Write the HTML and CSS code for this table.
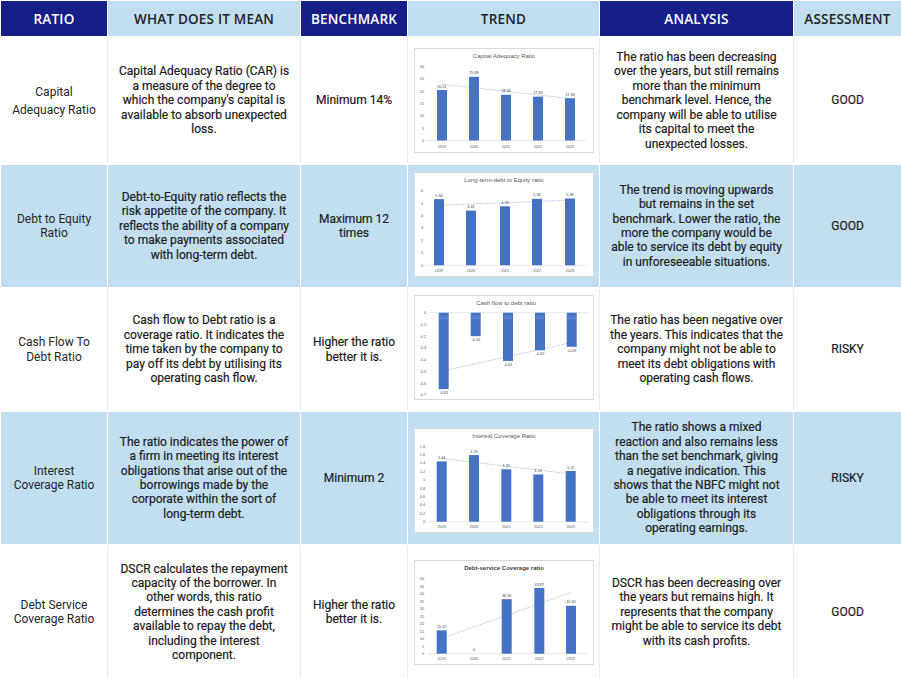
FILE: index.html
```html
<!DOCTYPE html>
<html lang="en">
<head>
<meta charset="utf-8">
<title>Ratio Analysis</title>
<link rel="stylesheet" href="styles.css">
</head>
<body>
<div class="table">
  <div class="row head">
    <div class="cell hd dark">RATIO</div>
    <div class="cell hd light">WHAT DOES IT MEAN</div>
    <div class="cell hd dark">BENCHMARK</div>
    <div class="cell hd light">TREND</div>
    <div class="cell hd dark">ANALYSIS</div>
    <div class="cell hd light">ASSESSMENT</div>
  </div>

  <div class="row white">
    <div class="cell name tall">Capital<br>Adequacy Ratio</div>
    <div class="cell txt">Capital Adequacy Ratio (CAR) is<br>a measure of the degree to<br>which the company's capital is<br>available to absorb unexpected<br>loss.</div>
    <div class="cell txt">Minimum 14%</div>
    <div class="cell chart">
      <svg class="plot" width="180" height="105" viewBox="0 0 180 105">
        <rect class="frame" x="0.5" y="0.5" width="179" height="104"/>
        <text class="title" x="90" y="10">Capital Adequacy Ratio</text>
        <g class="ylab">
          <text x="10" y="20">30</text><text x="10" y="32.3">25</text><text x="10" y="44.6">20</text><text x="10" y="56.9">15</text><text x="10" y="69.2">10</text><text x="10" y="81.5">5</text><text x="10" y="93.8">0</text>
        </g>
        <line class="axis" x1="13" y1="92.5" x2="172" y2="92.5"/>
        <line class="trend" x1="28" y1="36.1" x2="156" y2="50.6"/>
        <g class="bars">
          <rect x="23" y="42.05" width="10" height="50.45"/>
          <rect x="55" y="28.81" width="10" height="63.69"/>
          <rect x="87" y="46.84" width="10" height="45.66"/>
          <rect x="119" y="48.64" width="10" height="43.86"/>
          <rect x="151" y="50.24" width="10" height="42.26"/>
        </g>
        <g class="vlab">
          <text x="28" y="39.5">20.51</text><text x="60" y="26.3">25.89</text><text x="92" y="44.3">18.56</text><text x="124" y="46.1">17.83</text><text x="156" y="47.7">17.18</text>
        </g>
        <g class="xlab">
          <text x="28" y="99.5">2019</text><text x="60" y="99.5">2020</text><text x="92" y="99.5">2021</text><text x="124" y="99.5">2022</text><text x="156" y="99.5">2023</text>
        </g>
      </svg>
    </div>
    <div class="cell txt">The ratio has been decreasing<br>over the years, but still remains<br>more than the minimum<br>benchmark level. Hence, the<br>company will be able to utilise<br>its capital to meet the<br>unexpected losses.</div>
    <div class="cell txt">GOOD</div>
  </div>

  <div class="row blue">
    <div class="cell name">Debt to Equity<br>Ratio</div>
    <div class="cell txt">Debt-to-Equity ratio reflects the<br>risk appetite of the company. It<br>reflects the ability of a company<br>to make payments associated<br>with long-term debt.</div>
    <div class="cell txt">Maximum 12<br>times</div>
    <div class="cell chart up">
      <svg class="plot" width="180" height="105" viewBox="0 0 180 105">
        <rect class="frame" x="0.5" y="0.5" width="179" height="104"/>
        <text class="title" x="90" y="10">Long-term-debt to Equity ratio</text>
        <g class="ylab">
          <text x="9" y="20.2">6</text><text x="9" y="32.6">5</text><text x="9" y="45">4</text><text x="9" y="57.4">3</text><text x="9" y="69.8">2</text><text x="9" y="82.2">1</text><text x="9" y="94.6">0</text>
        </g>
        <line class="axis" x1="12" y1="93.3" x2="172" y2="93.3"/>
        <line class="trend" x1="25" y1="33.3" x2="156" y2="28.1"/>
        <g class="bars">
          <rect x="20" y="27.1" width="10" height="66.2"/>
          <rect x="52" y="38.6" width="10" height="54.7"/>
          <rect x="86" y="34.3" width="10" height="59"/>
          <rect x="118" y="26.8" width="10" height="66.5"/>
          <rect x="151" y="26.5" width="10" height="66.8"/>
        </g>
        <g class="vlab">
          <text x="25" y="24.6">5.34</text><text x="57" y="36.1">4.41</text><text x="91" y="31.8">4.76</text><text x="123" y="24.3">5.36</text><text x="156" y="24">5.39</text>
        </g>
        <g class="xlab">
          <text x="25" y="100">2019</text><text x="57" y="100">2020</text><text x="91" y="100">2021</text><text x="123" y="100">2022</text><text x="156" y="100">2023</text>
        </g>
      </svg>
    </div>
    <div class="cell txt">The trend is moving upwards<br>but remains in the set<br>benchmark. Lower the ratio, the<br>more the company would be<br>able to service its debt by equity<br>in unforeseeable situations.</div>
    <div class="cell txt">GOOD</div>
  </div>

  <div class="row white">
    <div class="cell name">Cash Flow To<br>Debt Ratio</div>
    <div class="cell txt">Cash flow to Debt ratio is a<br>coverage ratio. It indicates the<br>time taken by the company to<br>pay off its debt by utilising its<br>operating cash flow.</div>
    <div class="cell txt">Higher the ratio<br>better it is.</div>
    <div class="cell chart up">
      <svg class="plot" width="180" height="105" viewBox="0 0 180 105">
        <rect class="frame" x="0.5" y="0.5" width="179" height="104"/>
        <text class="title" x="92" y="10">Cash flow to debt ratio</text>
        <g class="ylab">
          <text x="12" y="19">0</text><text x="12" y="30.7">-0.1</text><text x="12" y="42.5">-0.2</text><text x="12" y="54.2">-0.3</text><text x="12" y="66">-0.4</text><text x="12" y="77.7">-0.5</text><text x="12" y="89.5">-0.6</text><text x="12" y="101.2">-0.7</text>
        </g>
        <line class="axis" x1="15" y1="17.7" x2="175" y2="17.7"/>
        <line class="trend" x1="29.7" y1="75.7" x2="157.7" y2="47.5"/>
        <g class="bars">
          <rect x="24.7" y="17.7" width="10" height="76.4"/>
          <rect x="56.7" y="17.7" width="10" height="23.5"/>
          <rect x="89" y="17.7" width="10" height="48.2"/>
          <rect x="121" y="17.7" width="10" height="37.6"/>
          <rect x="152.7" y="17.7" width="10" height="34.1"/>
        </g>
        <g class="xlab inbar">
          <text x="29.7" y="23.5">2019</text><text x="61.7" y="23.5">2020</text><text x="94" y="23.5">2021</text><text x="126" y="23.5">2022</text><text x="157.7" y="23.5">2023</text>
        </g>
        <g class="vlab">
          <text x="29.7" y="99">-0.65</text><text x="61.7" y="46">-0.20</text><text x="94" y="70.7">-0.41</text><text x="126" y="60">-0.32</text><text x="157.7" y="56.6">-0.29</text>
        </g>
      </svg>
    </div>
    <div class="cell txt">The ratio has been negative over<br>the years. This indicates that the<br>company might not be able to<br>meet its debt obligations with<br>operating cash flows.</div>
    <div class="cell txt">RISKY</div>
  </div>

  <div class="row blue">
    <div class="cell name">Interest<br>Coverage Ratio</div>
    <div class="cell txt">The ratio indicates the power of<br>a firm in meeting its interest<br>obligations that arise out of the<br>borrowings made by the<br>corporate within the sort of<br>long-term debt.</div>
    <div class="cell txt">Minimum 2</div>
    <div class="cell chart down">
      <svg class="plot" width="180" height="105" viewBox="0 0 180 105">
        <rect class="frame" x="0.5" y="0.5" width="179" height="104"/>
        <text class="title" x="90" y="10">Interest Coverage Ratio</text>
        <g class="ylab">
          <text x="11" y="19.6">1.8</text><text x="11" y="28">1.6</text><text x="11" y="36.3">1.4</text><text x="11" y="44.7">1.2</text><text x="11" y="53.1">1</text><text x="11" y="61.5">0.8</text><text x="11" y="69.9">0.6</text><text x="11" y="78.2">0.4</text><text x="11" y="86.6">0.2</text><text x="11" y="95">0</text>
        </g>
        <line class="axis" x1="14" y1="93.7" x2="174" y2="93.7"/>
        <line class="trend" x1="27.7" y1="30.5" x2="156.7" y2="45.9"/>
        <g class="bars">
          <rect x="22.7" y="33.4" width="10" height="60.3"/>
          <rect x="55" y="27.1" width="10" height="66.6"/>
          <rect x="87.3" y="41.3" width="10" height="52.4"/>
          <rect x="119.3" y="46.4" width="10" height="47.3"/>
          <rect x="151.7" y="43" width="10" height="50.7"/>
        </g>
        <g class="vlab">
          <text x="27.7" y="30.9">1.44</text><text x="60" y="24.6">1.59</text><text x="92.3" y="38.8">1.25</text><text x="124.3" y="43.9">1.13</text><text x="156.7" y="40.5">1.21</text>
        </g>
        <g class="xlab">
          <text x="27.7" y="100">2019</text><text x="60" y="100">2020</text><text x="92.3" y="100">2021</text><text x="124.3" y="100">2022</text><text x="156.7" y="100">2023</text>
        </g>
      </svg>
    </div>
    <div class="cell txt">The ratio shows a mixed<br>reaction and also remains less<br>than the set benchmark, giving<br>a negative indication. This<br>shows that the NBFC might not<br>be able to meet its interest<br>obligations through its<br>operating earnings.</div>
    <div class="cell txt">RISKY</div>
  </div>

  <div class="row white">
    <div class="cell name">Debt Service<br>Coverage Ratio</div>
    <div class="cell txt">DSCR calculates the repayment<br>capacity of the borrower. In<br>other words, this ratio<br>determines the cash profit<br>available to repay the debt,<br>including the interest<br>component.</div>
    <div class="cell txt">Higher the ratio<br>better it is.</div>
    <div class="cell chart">
      <svg class="plot" width="180" height="105" viewBox="0 0 180 105">
        <rect class="frame" x="0.5" y="0.5" width="179" height="104"/>
        <text class="title strong" x="90" y="10">Debt-service Coverage ratio</text>
        <g class="ylab">
          <text x="10" y="20">50</text><text x="10" y="27.5">45</text><text x="10" y="35">40</text><text x="10" y="42.5">35</text><text x="10" y="50">30</text><text x="10" y="57.5">25</text><text x="10" y="65">20</text><text x="10" y="72.5">15</text><text x="10" y="80">10</text><text x="10" y="87.5">5</text><text x="10" y="95">0</text>
        </g>
        <line class="axis" x1="14" y1="93.7" x2="174" y2="93.7"/>
        <line class="trend" x1="27.7" y1="78.4" x2="157" y2="32.4"/>
        <g class="bars">
          <rect x="22.7" y="70.4" width="10" height="23.3"/>
          <rect x="87.7" y="39.2" width="10" height="54.5"/>
          <rect x="120.3" y="27.9" width="10" height="65.8"/>
          <rect x="152" y="45.8" width="10" height="47.9"/>
        </g>
        <g class="vlab">
          <text x="27.7" y="68">15.52</text><text x="60" y="91.2">0</text><text x="92.7" y="36.8">36.35</text><text x="125.3" y="25.5">43.87</text><text x="157" y="43.4">31.92</text>
        </g>
        <g class="xlab">
          <text x="27.7" y="100">2019</text><text x="60" y="100">2020</text><text x="92.7" y="100">2021</text><text x="125.3" y="100">2022</text><text x="157" y="100">2023</text>
        </g>
      </svg>
    </div>
    <div class="cell txt">DSCR has been decreasing over<br>the years but remains high. It<br>represents that the company<br>might be able to service its debt<br>with its cash profits.</div>
    <div class="cell txt">GOOD</div>
  </div>
</div>
</body>
</html>
```

FILE: styles.css
```css
* { box-sizing: border-box; }

html, body {
  margin: 0;
  padding: 0;
  background: #ffffff;
}

body {
  width: 901px;
  height: 678px;
  overflow: hidden;
  font-family: Roboto, "Liberation Sans", Arial, sans-serif;
  color: #212121;
}

.table {
  display: grid;
  grid-template-rows: 35px 125px 122px 121px 132px 132px;
  row-gap: 2px;
  padding: 1px 0 0 1px;
  height: 678px;
  background: #ffffff;
}

.row {
  display: grid;
  grid-template-columns: 106px 192px 106px 191px 193px 1fr;
  column-gap: 1px;
}

.row.head { background: #ffffff; }
.row.white { background: #e1eef8; }
.row.blue { background: #ffffff; }

.cell {
  display: flex;
  align-items: center;
  justify-content: center;
  text-align: center;
  padding: 0 6px;
}

.row.white .cell { background: #ffffff; }
.row.blue .cell { background: #c1dff1; }

.hd {
  font-family: "Open Sans", "Noto Sans", sans-serif;
  font-size: 13.5px;
  font-weight: 600;
  letter-spacing: 0.2px;
  padding: 0 4px;
}

.hd.dark {
  background: #161f87;
  color: #ffffff;
}

.hd.light {
  background: #c1dff1;
  color: #222222;
}

.name {
  font-size: 12px;
  font-weight: 400;
  line-height: 14.5px;
  color: #262626;
}

.name.tall { line-height: 18px; }

.txt {
  font-size: 12px;
  font-weight: 400;
  -webkit-text-stroke: 0.2px #1c1c1c;
  color: #1c1c1c;
  line-height: 14.4px;
  padding: 0 3px;
  white-space: nowrap;
}

.chart { padding: 0; }
.chart.up .plot { margin-top: -4px; }
.chart.down .plot { margin-top: 4px; }

.plot { display: block; }

.plot .frame { fill: #ffffff; stroke: #d9d9d9; stroke-width: 1; }
.plot text { font-family: "Liberation Sans", Arial, sans-serif; fill: #595959; }
.plot .title { font-size: 6px; text-anchor: middle; }
.plot .title.strong { font-weight: 700; fill: #404040; }
.plot .ylab text { font-size: 3.8px; text-anchor: end; }
.plot .xlab text { font-size: 3.8px; text-anchor: middle; }
.plot .xlab.inbar text { fill: #8aa7d6; }
.plot .vlab text { font-size: 3.8px; text-anchor: middle; fill: #404040; }
.plot .axis { stroke: #d9d9d9; stroke-width: 0.6; }
.plot .trend { stroke: #7f9fd8; stroke-width: 0.6; stroke-dasharray: 1.4 1; }
.plot .bars rect { fill: #4472c4; }
```
